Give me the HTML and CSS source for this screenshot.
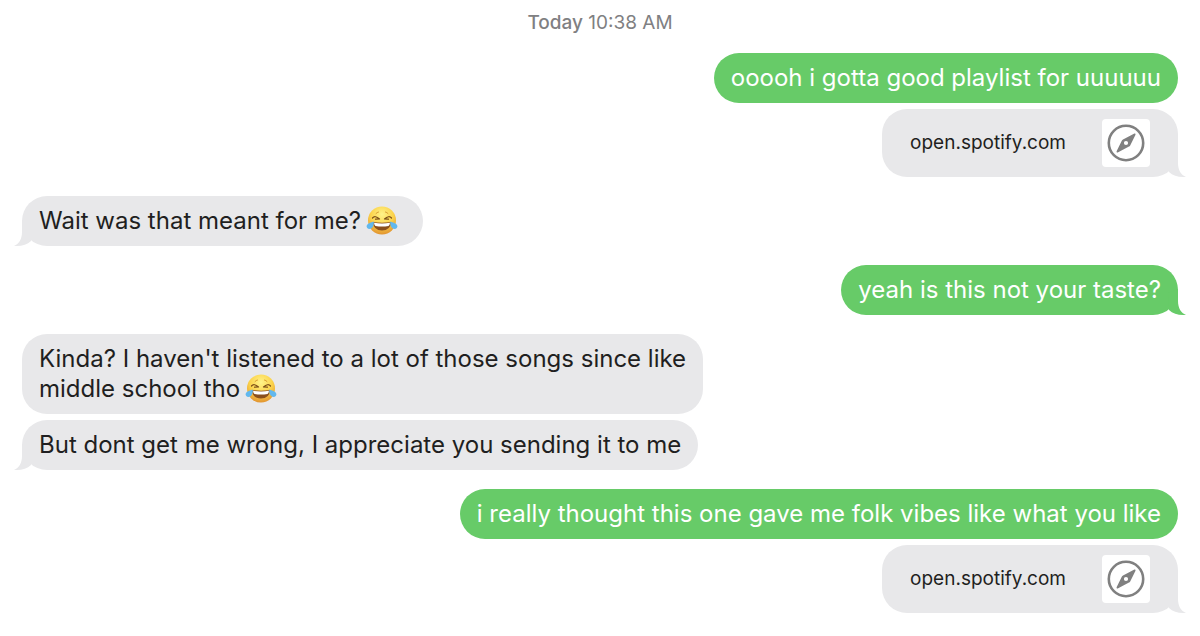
FILE: index.html
```html
<!DOCTYPE html>
<html lang="en">
<head>
  <meta charset="UTF-8">
  <meta name="viewport" content="width=device-width, initial-scale=1.0">
  <title>Messages</title>
  <link rel="stylesheet" href="styles.css">
</head>
<body>
  <!-- shared shapes -->
  <svg class="defs" width="0" height="0" aria-hidden="true">
    <defs>
      <radialGradient id="face" cx="50%" cy="28%" r="74%">
        <stop offset="0" stop-color="#fff48a"/>
        <stop offset="0.55" stop-color="#fbd24a"/>
        <stop offset="1" stop-color="#e0902f"/>
      </radialGradient>
      <symbol id="joy" viewBox="0 0 32 30">
        <circle cx="16" cy="14.500" r="14" fill="url(#face)"/>
        <path d="M6.500 12Q9 9 13.500 13L9.500 13.200M25.500 12Q23 9 18.500 13L22.500 13.200" fill="none" stroke="#7a4d17" stroke-width="1.200" stroke-linecap="round" stroke-linejoin="round"/>
        <path d="M10 7.500Q11 6.300 12.500 6M22 7.500Q21 6.300 19.500 6" fill="none" stroke="#d79a30" stroke-linecap="round"/>
        <path d="M7 16Q16 17.500 25 16Q24.500 24.500 16 24.500Q7.500 24.500 7 16Z" fill="#8a4f1c"/>
        <path d="M8 16.800Q16 18 24 16.800Q23.800 19.300 22.500 20Q16 21 9.500 20Q8.200 19.300 8 16.800Z" fill="#fff"/>
        <path d="M7.800 15.500Q8 20.500 5.500 22.300Q3 23.800 1.200 22Q-0.300 20 1.800 18Q3.500 16.500 7.800 15.500Z" fill="#62b8ee"/>
        <path d="M24.200 15.500Q24 20.500 26.500 22.300Q29 23.800 30.800 22Q32.300 20 30.200 18Q28.500 16.500 24.200 15.500Z" fill="#62b8ee"/>
      </symbol>
      <symbol id="tail" viewBox="0 0 18 26">
        <path d="M0 4L10 0V12C10 19 13 24 18 26C11 26.200 5 25 1 21Z"/>
      </symbol>
      <symbol id="compass" viewBox="0 0 48 48">
        <circle cx="24" cy="24" r="17.200" fill="none" stroke="#808080" stroke-width="2.600"/>
        <path fill="#808080" fill-rule="evenodd" d="M32.400 14.500Q33.900 14.300 33.500 15.700L28.200 26.400Q27.800 27.200 27 27.600L15.700 33.400Q14.300 33.800 14.600 32.300L19.900 21.600Q20.300 20.800 21 20.400ZM24 21.900A2.100 2.100 0 1 0 24 26.100A2.100 2.100 0 1 0 24 21.900Z"/>
      </symbol>
    </defs>
  </svg>

  <main class="thread">
    <p class="timestamp"><strong>Today</strong> 10:38 AM</p>

    <div class="group sent">
      <div class="bubble">ooooh i gotta good playlist for uuuuuu</div>
      <a class="bubble link-card" href="https://open.spotify.com">
        <span>open.spotify.com</span>
        <svg class="link-icon" aria-hidden="true"><use href="#compass"/></svg>
        <svg class="tail" aria-hidden="true"><use href="#tail"/></svg>
      </a>
    </div>

    <div class="group received">
      <div class="bubble">Wait was that meant for me? <svg class="emoji" role="img" aria-label="face with tears of joy"><use href="#joy"/></svg>
        <svg class="tail" aria-hidden="true"><use href="#tail"/></svg>
      </div>
    </div>

    <div class="group sent">
      <div class="bubble">yeah is this not your taste?
        <svg class="tail" aria-hidden="true"><use href="#tail"/></svg>
      </div>
    </div>

    <div class="group received">
      <div class="bubble">Kinda? I haven't listened to a lot of those songs since like<br>middle school tho <svg class="emoji" role="img" aria-label="face with tears of joy"><use href="#joy"/></svg></div>
      <div class="bubble">But dont get me wrong, I appreciate you sending it to me
        <svg class="tail" aria-hidden="true"><use href="#tail"/></svg>
      </div>
    </div>

    <div class="group sent">
      <div class="bubble">i really thought this one gave me folk vibes like what you like</div>
      <a class="bubble link-card" href="https://open.spotify.com">
        <span>open.spotify.com</span>
        <svg class="link-icon" aria-hidden="true"><use href="#compass"/></svg>
        <svg class="tail" aria-hidden="true"><use href="#tail"/></svg>
      </a>
    </div>
  </main>
</body>
</html>
```

FILE: styles.css
```css
body {
  margin: 0;
  background-color: #fff;
  color: #1f1f21;
  font-family: Inter, "Liberation Sans", sans-serif;
  font-size: 24px;
  line-height: 30px;
}

.defs {
  position: absolute;
}

.thread {
  display: flex;
  flex-direction: column;
  gap: 19px;
  padding: 12px 22px 22px;
}

.timestamp {
  margin: 0;
  color: #808082;
  font-size: 19px;
  line-height: 22px;
  text-align: center;
}

.timestamp strong {
  font-weight: 500;
}

.group {
  display: flex;
  flex-direction: column;
  gap: 6px;
}

.sent {
  align-items: flex-end;
}

.received {
  align-items: flex-start;
}

.bubble {
  position: relative;
  padding: 10px 17px;
  border-radius: 25px;
  background-color: #e8e8ea;
  fill: #e8e8ea;
}

.sent .bubble {
  background-color: #67cb68;
  color: #fff;
  fill: #67cb68;
}

.sent .link-card {
  display: flex;
  align-items: center;
  gap: 36px;
  padding: 10px 28px;
  background-color: #e8e8ea;
  color: #1f1f21;
  fill: #e8e8ea;
  font-size: 19px;
  text-decoration: none;
}

.link-icon {
  width: 48px;
  height: 48px;
  border-radius: 4px;
  background-color: #fff;
}

.emoji {
  width: 32px;
  height: 30px;
  margin-left: -2px;
  margin-right: 8px;
  vertical-align: top;
}

.tail {
  position: absolute;
  bottom: 0;
  right: -8px;
  width: 18px;
  height: 26px;
}

.received .tail {
  right: auto;
  left: -8px;
  transform: scaleX(-1);
}
```
